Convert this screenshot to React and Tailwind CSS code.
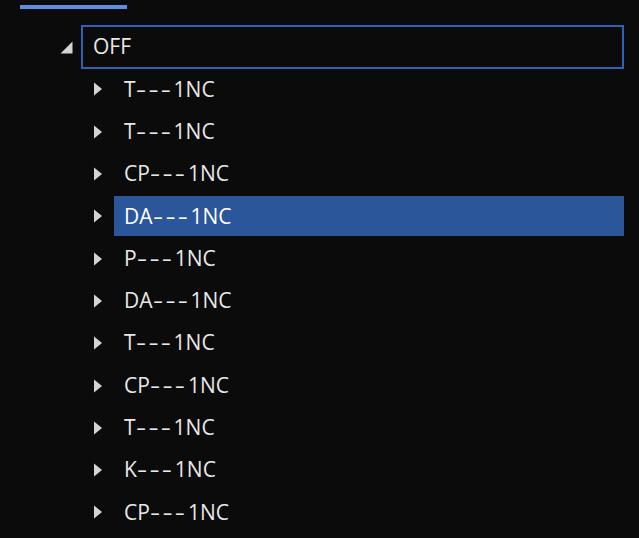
import React from "react";

const items = [
    "T---1NC",
    "T---1NC",
    "CP---1NC",
    "DA---1NC",
    "P---1NC",
    "DA---1NC",
    "T---1NC",
    "CP---1NC",
    "T---1NC",
    "K---1NC",
    "CP---1NC",
];

const Collapsed = () => (
    <svg width="10" height="14" viewBox="0 0 10 14" className="shrink-0">
        <path d="M1 0.5 L9 7 L1 13.5 Z" fill="#d4d4d4" />
    </svg>
);

const Expanded = () => (
    <svg width="13" height="13" viewBox="0 0 13 13" className="shrink-0">
        <path d="M12.5 0.5 L12.5 12.5 L0.5 12.5 Z" fill="#d4d4d4" />
    </svg>
);

// the source font draws much longer hyphens, so stretch them a bit
const Label = ({ text }) => {
    const [head, tail] = text.split("---");
    return (
        <span>
            {head}
            <span className="inline-block w-[38px]">
                <span className="inline-block origin-left scale-x-[1.5] tracking-[1.5px]">---</span>
            </span>
            {tail}
        </span>
    );
};

const App = () => {
    const selected = 3;
    return (
        <div
            className="w-[639px] h-[538px] overflow-hidden bg-[#0b0b0b] text-[#e8e8e8]"
            style={{ fontFamily: '"Open Sans", "Noto Sans", sans-serif' }}
        >
            <div className="ml-[20px] mt-[5px] w-[107px] h-[4px] bg-[#5b8fe6]" />

            <div className="mt-[17px] pl-[60px] pr-[15px]">
                <div className="flex items-center h-[42.3px]">
                    <div className="w-[21px] flex items-center">
                        <Expanded />
                    </div>
                    <div className="flex-1 h-[44px] flex items-center pl-[10px] border-2 border-[#2f62b5] text-[21px]">
                        OFF
                    </div>
                </div>

                {items.map((name, i) => (
                    <div key={i} className="flex items-center h-[42.3px] pl-[33px]">
                        <div className="w-[21px] flex items-center">
                            <Collapsed />
                        </div>
                        <div
                            className={
                                "flex-1 h-[40px] flex items-center pl-[10px] text-[21px] " +
                                (i === selected ? "bg-[#2b579a] text-white" : "")
                            }
                        >
                            <Label text={name} />
                        </div>
                    </div>
                ))}
            </div>
        </div>
    );
};

export default App;
